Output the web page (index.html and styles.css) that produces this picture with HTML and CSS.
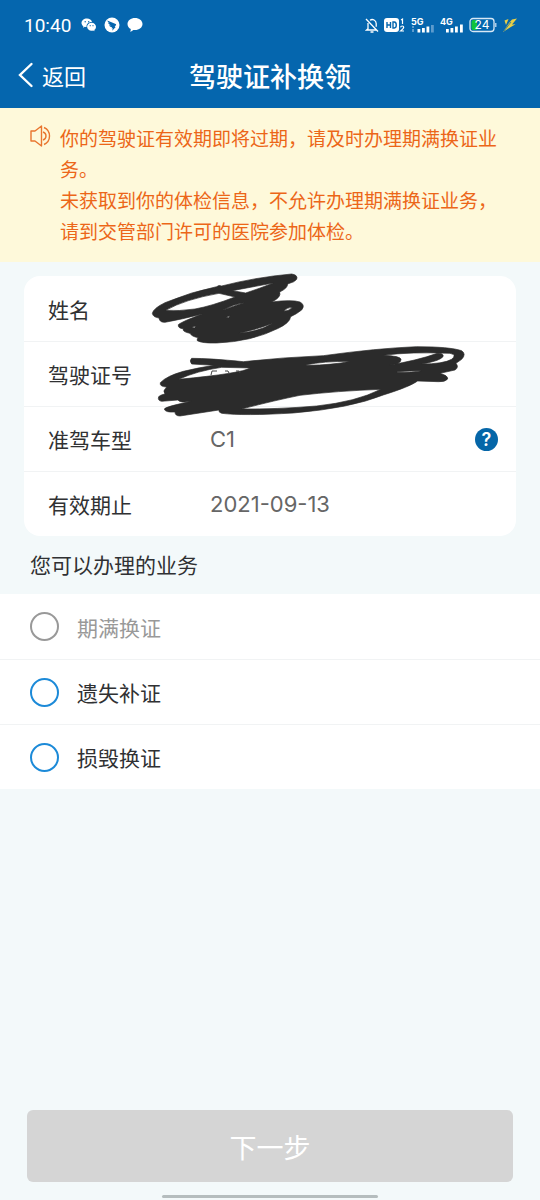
FILE: index.html
```html
<!DOCTYPE html>
<html lang="zh-CN">
<head>
<meta charset="utf-8">
<meta name="viewport" content="width=device-width, initial-scale=1">
<title>驾驶证补换领</title>
<link rel="stylesheet" href="styles.css">
</head>
<body class="page">
<header class="header">
  <div class="status">
    <span class="clock">10:40</span>
    <svg class="app-icon" width="16" height="16" viewBox="0 0 16 16"><path fill="#fff" d="M6 1.500C2.900 1.500.5 3.400.5 5.900c0 1.300.8 2.500 1.900 3.300L2 10.800l1.900-1c.6.2 1.100.3 1.700.3C5 7.100 7.400 4.800 11 4.900 10.500 2.900 8.500 1.500 6 1.500z"/><path fill="#fff" d="M10.600 5.700c-2.500 0-4.500 1.800-4.500 4s2 4 4.500 4c.5 0 1-.1 1.500-.2l1.500.8-.4-1.300c1.100-.7 1.800-1.900 1.800-3.300 0-2.200-2-4-4.400-4z"/><g fill="#0566ae"><circle cx="4.200" cy="4.800" r=".7"/><circle cx="7.700" cy="4.800" r=".7"/><circle cx="9.200" cy="8.700" r=".6"/><circle cx="12" cy="8.700" r=".6"/></g></svg>
    <svg class="app-icon" width="16" height="16" viewBox="0 0 16 16"><circle cx="8" cy="8" r="7.500" fill="#fff"/><path fill="#0566ae" d="M3.300 3.600l8.400 3.300c.5.200.6.600.3 1.100L10.700 10h1L8.200 13.800l.6-2.600H7.500l.5-1.100c-1.600 0-2.500-.7-2.900-1.800l1.800.1C5.100 7.700 4.200 6.700 4 5.600l1.800.6C4.400 5.400 3.600 4.600 3.300 3.600z"/></svg>
    <svg class="app-icon" width="16" height="16" viewBox="0 0 16 16"><path fill="#fff" d="M8 1C3.800 1 .5 3.600.5 7c0 2.100 1.300 4 3.300 5.100L3.400 15l3-2.100c.5.100 1.100.1 1.600.1 4.200 0 7.500-2.600 7.500-6S12.200 1 8 1z"/></svg>
    <div class="indicators">
      <svg width="14" height="16" viewBox="0 0 14 16" fill="none" stroke="#fff" stroke-width="1.300"><path d="M5 3.200a4 4 0 0 1 6.200 3.300v3.300M3 6v5.700L1.600 13h9.600M5.500 15h3M1 2l12 12.500"/></svg>
      <svg width="22" height="16" viewBox="0 0 22 16"><rect y="1" width="15" height="14" rx="3" fill="#fff"/><path d="M3 5v6M6.500 5v6M3 8h3.500M9 5v6h1.300q2-.2 2-3t-2-3z" fill="none" stroke="#0566ae" stroke-width="1.400"/><path d="M17 3l1.500-1v5M16.600 10.300q.2-1.300 1.600-1.300 1.500 0 1.500 1.300 0 1-3 3.700h3.300" fill="none" stroke="#fff" stroke-width="1.200"/></svg>
      <svg width="24" height="20" viewBox="0 -2 24 20"><text class="net" x="0" y="8">5G</text><path fill="#fff" d="M6.500 12h2.800v3.500H6.500zM11 11h2.800v4.500H11zM15.500 9.500h2.800v6h-2.800z"/><path fill="#5d9bcd" d="M20 8h2.800v7.500H20zM1 9h2v2H1zM1 12h2v3H1z"/></svg>
      <svg width="24" height="20" viewBox="0 -2 24 20"><text class="net" x="0" y="8">4G</text><path fill="#fff" d="M6 12h2.800v3.500H6zM10.500 11h2.800v4.500h-2.800zM15 9.500h2.800v6H15zM20 7.500h2.800v8H20z"/></svg>
      <svg width="28" height="16" viewBox="0 0 28 16"><rect x="1" y="1.500" width="24" height="13" rx="3" fill="none" stroke="#d8e8f5" stroke-width="1.300"/><path fill="#10c33c" d="M4.500 3h3.500v10H4.500Q2.500 13 2.500 11V5Q2.500 3 4.500 3z"/><path fill="#a8cbe8" d="M26 6h1.500v4H26z"/><text class="charge" x="13" y="12">24</text></svg>
      <svg width="15" height="16" viewBox="0 0 15 16"><path fill="#e9cf45" d="M2.500 3.500l4-1.500-2.500 6zM7 6l3-3.500L15 1.500 10 7.500l3.500-.3L8 10.500 1 15z"/><path d="M2 14L9 5" stroke="#0566ae" stroke-width=".7"/></svg>
    </div>
  </div>
  <nav class="nav">
    <button class="back" type="button"><svg width="16" height="26" viewBox="0 0 16 26"><path d="M13.500 2L2 13l11.500 11" fill="none" stroke="#fff" stroke-width="2.400" stroke-linecap="round"/></svg>返回</button>
    <h1 class="title">驾驶证补换领</h1>
  </nav>
</header>
<section class="notice">
  <svg class="speaker" width="21" height="22" viewBox="0 0 21 22" fill="none" stroke="#e9762f" stroke-width="1.400" stroke-linejoin="round"><path d="M1 6h4L11.500 1v20L5 16H1zM13 7q3 1 3 4t-3 4M14 2.500q5.500 2.500 5.500 8.500T14 19.500"/></svg>
  <p class="notice-text">你的驾驶证有效期即将过期，请及时办理期满换证业务。<br>未获取到你的体检信息，不允许办理期满换证业务，请到交管部门许可的医院参加体检。</p>
</section>
<main class="main">
  <dl class="card">
    <div class="row"><dt>姓名</dt><dd></dd></div>
    <div class="row"><dt>驾驶证号</dt><dd></dd></div>
    <div class="row"><dt>准驾车型</dt><dd>C1</dd><dd class="row-end"><button class="help" type="button" aria-label="帮助">?</button></dd></div>
    <div class="row"><dt>有效期止</dt><dd>2021-09-13</dd></div>
    <svg class="scribble" width="320" height="150" viewBox="150 270 320 150" aria-hidden="true">
      <g fill="#2b2b2b" stroke="#2b2b2b" stroke-width="2" stroke-linejoin="round" fill-rule="evenodd">
        <path transform="translate(145 270) scale(.3333)" d="M22 130Q25 115 60 98Q140 65 215 50Q222 44 230 48Q330 22 440 12Q460 15 455 28Q450 36 428 42Q428 55 404 66Q410 82 380 96Q440 88 465 96Q482 105 470 120Q455 132 437 140Q435 158 400 175Q320 215 215 219Q170 220 157 212Q155 205 160 203Q140 200 135 190Q110 185 115 176Q98 175 100 164Q110 155 172 132Q110 148 60 157Q44 158 42 144Q24 142 22 130Z
          M62 121Q120 88 222 70L270 81Q200 108 150 117Q100 124 62 121Z M262 62L385 39Q345 55 302 69Z M235 120Q265 102 298 98Q265 108 235 120Z M140 172l12-4-3 6z M243 142l12-5-4 6z M282 190Q330 180 384 160Q340 185 282 190Z M417 124Q425 112 442 112Q435 122 417 124Z"/>
        <path transform="translate(150 340) scale(.3333)" d="M125 55Q180 55 280 65Q400 52 520 47Q680 25 800 20Q900 20 935 32Q950 42 935 58L918 70Q928 82 915 90L870 100Q895 107 893 117Q885 127 865 125L803 123Q780 140 700 165Q600 205 430 219Q280 228 215 220Q205 217 207 210L90 228Q75 228 75 216Q45 218 43 207Q45 200 125 184Q90 190 84 180L35 184Q22 182 26 170Q30 165 45 162Q38 152 46 146L50 141Q28 140 31 128Q50 108 100 94Q150 82 192 76L125 72Q117 62 125 55Z
          M86 118Q140 93 215 82L300 84Q275 100 86 118Z M470 74Q520 64 600 64Q550 75 470 76Z M700 46Q780 35 900 40Q922 44 905 58Q880 72 815 72Q875 62 880 48Q878 38 862 40Q800 62 718 75Q755 72 753 58Q752 48 700 46Z M742 95Q780 92 815 92Q790 97 742 97Z M275 207Q380 180 450 166Q560 153 692 148Q620 185 500 198Q380 208 275 207Z"/>
      </g>
      <path d="M217 371h-5l-1 4M225 371q4-1 4 2M236 371q4-1 4 2" fill="none" stroke="#444" stroke-width="1"/>
    </svg>
  </dl>
  <form class="services">
    <fieldset class="group">
      <legend class="legend">您可以办理的业务</legend>
      <label class="option option-off"><input class="radio" type="radio" name="service" disabled>期满换证</label>
      <label class="option"><input class="radio" type="radio" name="service">遗失补证</label>
      <label class="option"><input class="radio" type="radio" name="service">损毁换证</label>
    </fieldset>
    <button class="next" type="submit" disabled>下一步</button>
  </form>
</main>
<div class="home-bar"></div>
</body>
</html>
```
FILE: styles.css
```css
* { box-sizing: border-box; }

.page {
  margin: 0;
  min-height: 100vh;
  display: flex;
  flex-direction: column;
  background: #f3f9fa;
  color: #303133;
  font-family: Inter, "Noto Sans CJK SC", sans-serif;
  font-size: 21px;
}

button { font: inherit; border: 0; padding: 0; }

.header { background: #0566ae; color: #fff; padding-bottom: 8px; }

.status {
  height: 50px;
  display: flex;
  align-items: center;
  gap: 7px;
  padding: 0 23px 0 24px;
}
.clock { font-family: Roboto, sans-serif; font-size: 19px; margin-right: 3px; }
.indicators { margin-left: auto; display: flex; align-items: center; gap: 5px; }
.net { font: bold 9px Inter, sans-serif; fill: #fff; }
.charge { font: 12px Inter, sans-serif; fill: #fff; text-anchor: middle; }

.nav {
  height: 50px;
  display: grid;
  grid-template-columns: 1fr auto 1fr;
  align-items: center;
  padding: 0 18px;
}
.back {
  justify-self: start;
  display: flex;
  align-items: center;
  gap: 8px;
  background: none;
  color: #fff;
  font-size: 22px;
}
.title { margin: 0; font-size: 27px; font-weight: 500; }

.notice {
  display: flex;
  align-items: flex-start;
  gap: 9px;
  padding: 16px 30px 14px;
  background: #fef9da;
  color: #ec6618;
}
.speaker { flex: none; margin-top: 1px; }
.notice-text { margin: 0; font-size: 19px; line-height: 31px; }

.main { flex: 1; display: flex; flex-direction: column; }

.card {
  position: relative;
  margin: 14px 24px 0;
  background: #fff;
  border-radius: 16px;
}
.row {
  min-height: 65px;
  display: flex;
  align-items: center;
  padding: 0 18px 0 24px;
}
.row + .row { border-top: 1px solid #f1f3f4; }
.row dt { width: 162px; }
.row dd { margin: 0; color: #666; font-size: 22px; }
.row .row-end { margin-left: auto; }
.help {
  display: block;
  width: 23px;
  height: 23px;
  border-radius: 50%;
  background: #0566a8;
  color: #fff;
  font-size: 18px;
  font-weight: 600;
  line-height: 23px;
}
.scribble { position: absolute; left: 126px; top: -6px; }

.services { flex: 1; display: flex; flex-direction: column; }
.group { margin: 0; padding: 0; border: 0; min-width: 0; }
.legend { padding: 2px 30px 0; line-height: 56px; }
.option {
  height: 65px;
  display: flex;
  align-items: center;
  gap: 18px;
  padding: 0 30px;
  background: #fff;
}
.option + .option { border-top: 1px solid #f1f3f4; }
.option-off { color: #999; }
.radio {
  appearance: none;
  width: 29px;
  height: 29px;
  margin: 0;
  border: 2px solid #1c8ad8;
  border-radius: 50%;
}
.radio:checked { background: #1c8ad8; }
.radio:disabled { border-color: #999; }

.next {
  margin: auto 27px 13px;
  height: 72px;
  border-radius: 6px;
  background: #d5d5d5;
  color: #fff;
  font-size: 27px;
}
.home-bar {
  width: 40%;
  height: 3px;
  margin: 0 auto 2px;
  border-radius: 2px;
  background: #b5bdbe;
}
```
